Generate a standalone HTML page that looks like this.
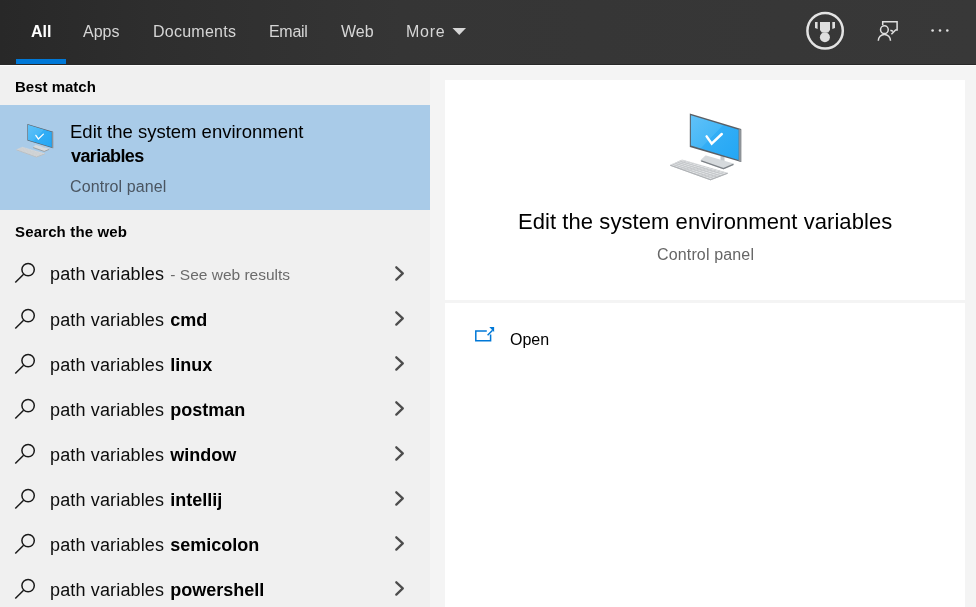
<!DOCTYPE html>
<html><head><meta charset="utf-8">
<style>
*{margin:0;padding:0;box-sizing:border-box}
html,body{width:976px;height:607px;overflow:hidden;background:#f4f4f4;font-family:"Liberation Sans",sans-serif}
.a{position:absolute;white-space:pre;line-height:1;will-change:transform}
.ic{position:absolute;overflow:visible}
#hdr{position:absolute;left:0;top:0;width:976px;height:65px;background:linear-gradient(90deg,#282828 0,#2e2e2e 150px,#353535 400px,#383838 976px)}
.tab{color:#d6d6d6;font-size:16px;top:23.5px}
#left{position:absolute;left:0;top:65px;width:430px;height:542px;background:#f0f0f0}
#sel{position:absolute;left:0;top:105px;width:430px;height:105px;background:#a9cbe8}
.card{position:absolute;left:445px;width:520px;background:#fff}
.row{font-size:18px;color:#0d0d0d;left:50px;letter-spacing:0.15px}
.row b{font-weight:700;color:#000;letter-spacing:0;margin-left:1px}
.sw{font-size:15.5px;color:#6b6b6b;letter-spacing:0;margin-left:1px}
</style></head><body>
<div id="hdr"></div>
<div class="a tab" style="left:31px;color:#fff;font-weight:700">All</div>
<div style="position:absolute;left:16px;top:59px;width:50px;height:5px;background:#0078d7"></div>
<div class="a tab" style="left:83px">Apps</div>
<div class="a tab" style="left:152.5px;letter-spacing:0.25px">Documents</div>
<div class="a tab" style="left:269px;letter-spacing:-0.3px">Email</div>
<div class="a tab" style="left:341px">Web</div>
<div class="a tab" style="left:406px;letter-spacing:0.75px">More</div>
<svg class="ic" style="left:800px;top:5px" width="50" height="52" viewBox="800 5 50 52">
<circle cx="825.1" cy="30.75" r="17.7" fill="none" stroke="#e3e3e3" stroke-width="2.5"/>
<polygon points="820,22 830,22 830,30 828.2,32.6 821.8,32.6 820,30" fill="#dedede"/>
<circle cx="824.9" cy="37.2" r="5" fill="#dedede"/>
<polygon points="815,22 817.6,22 817.6,29 815,28" fill="#dedede"/>
<polygon points="832.3,22 835,22 835,28 832.3,29" fill="#dedede"/>
</svg>
<svg class="ic" style="left:870px;top:15px" width="36" height="36" viewBox="870 15 36 36">
<path d="M882.7 25V21.7H897.1V30H895.6L891.4 34.3" fill="none" stroke="#e0e0e0" stroke-width="1.5"/>
<path d="M890.4 30.3L893 31.2" fill="none" stroke="#e0e0e0" stroke-width="1.5"/>
<circle cx="884.4" cy="29.7" r="3.85" fill="none" stroke="#e0e0e0" stroke-width="1.5"/>
<path d="M878.3 40.8A6.1 6.4 0 0 1 890.5 40.8" fill="none" stroke="#e0e0e0" stroke-width="1.5"/>
</svg>
<svg class="ic" style="left:925px;top:25px" width="30" height="12" viewBox="925 25 30 12">
<circle cx="932.6" cy="30.5" r="1.3" fill="#e0e0e0"/><circle cx="940" cy="30.5" r="1.3" fill="#e0e0e0"/><circle cx="947.3" cy="30.5" r="1.3" fill="#e0e0e0"/>
</svg>
<svg class="ic" style="left:450px;top:25px" width="20" height="14" viewBox="450 25 20 14"><polygon points="452.5,28 466,28 459.25,35" fill="#d6d6d6"/></svg>
<div id="left"></div>
<div style="position:absolute;left:0;top:64px;width:976px;height:1px;background:#282828"></div>
<div style="position:absolute;left:0;top:65px;width:976px;height:1px;background:#fbfbfb"></div>
<div id="sel"></div>
<svg class="ic" style="left:10px;top:115px" width="50" height="50" viewBox="10 115 50 50">
<g transform="translate(-317.5,67.15) scale(0.5)">
<linearGradient id="scrb" x1="690" y1="113" x2="741" y2="162" gradientUnits="userSpaceOnUse"><stop offset="0" stop-color="#62c2f8"/><stop offset="0.45" stop-color="#45b7f7"/><stop offset="0.46" stop-color="#33aef6"/><stop offset="1" stop-color="#22a6f4"/></linearGradient>
<polygon points="667.70,165.30 679.50,160.00 725.00,173.20 707.90,179.80" fill="#e2e4e6" stroke="#d4d6d8" stroke-width="1" stroke-linejoin="round"/>
<line x1="670.06" y1="164.24" x2="711.32" y2="178.48" stroke="#bfc2c5" stroke-width="0.9"/>
<line x1="672.42" y1="163.18" x2="714.74" y2="177.16" stroke="#bfc2c5" stroke-width="0.9"/>
<line x1="674.78" y1="162.12" x2="718.16" y2="175.84" stroke="#bfc2c5" stroke-width="0.9"/>
<line x1="677.14" y1="161.06" x2="721.58" y2="174.52" stroke="#bfc2c5" stroke-width="0.9"/>
<line x1="671.05" y1="166.51" x2="683.29" y2="161.10" stroke="#c6c9cc" stroke-width="0.9"/>
<line x1="674.40" y1="167.72" x2="687.08" y2="162.20" stroke="#c6c9cc" stroke-width="0.9"/>
<line x1="677.75" y1="168.93" x2="690.88" y2="163.30" stroke="#c6c9cc" stroke-width="0.9"/>
<line x1="681.10" y1="170.13" x2="694.67" y2="164.40" stroke="#c6c9cc" stroke-width="0.9"/>
<line x1="684.45" y1="171.34" x2="698.46" y2="165.50" stroke="#c6c9cc" stroke-width="0.9"/>
<line x1="687.80" y1="172.55" x2="702.25" y2="166.60" stroke="#c6c9cc" stroke-width="0.9"/>
<line x1="691.15" y1="173.76" x2="706.04" y2="167.70" stroke="#c6c9cc" stroke-width="0.9"/>
<line x1="694.50" y1="174.97" x2="709.83" y2="168.80" stroke="#c6c9cc" stroke-width="0.9"/>
<line x1="697.85" y1="176.18" x2="713.62" y2="169.90" stroke="#c6c9cc" stroke-width="0.9"/>
<line x1="701.20" y1="177.38" x2="717.42" y2="171.00" stroke="#c6c9cc" stroke-width="0.9"/>
<line x1="704.55" y1="178.59" x2="721.21" y2="172.10" stroke="#c6c9cc" stroke-width="0.9"/>
<polyline points="667.70,165.30 707.90,179.80 725.00,173.20" fill="none" stroke="#aeb1b4" stroke-width="1.2" stroke-linejoin="round"/>
<polygon points="701.2,160.6 706,156.2 733.4,164.2 723.5,168.4" fill="#d6dadd" stroke="#d6dadd" stroke-width="1.6" stroke-linejoin="round"/>
<polyline points="701.2,160.8 723.5,168.6 733.4,164.4" fill="none" stroke="#7d8287" stroke-width="1.3" stroke-linejoin="round"/>
<polygon points="720.5,155 724.5,156 724.5,161 720.5,160" fill="#c3c8cc"/>
<polygon points="689.8,113.5 741.2,129.1 741.2,162 689.8,146.9" fill="#5a5f65"/>
<polygon points="738.6,129 741.2,129.8 741.2,162 738.6,161.2" fill="#8e9398"/>
<polygon points="690.9,115.2 738.6,129.7 738.6,160 690.9,145.6" fill="url(#scrb)"/>
<polyline points="706.6,136.4 711.7,143.6 721.8,134" fill="none" stroke="#fff" stroke-width="2.5" stroke-linecap="round"/>
</g>
</svg>
<div class="a" style="left:15px;top:79px;font-size:15px;font-weight:700;color:#000">Best match</div>
<div class="a" style="left:70px;top:123px;font-size:18.5px;color:#000">Edit the system environment</div>
<div class="a" style="left:70.5px;top:147px;font-size:18px;font-weight:700;color:#000;letter-spacing:-0.6px">variables</div>
<div class="a" style="left:70px;top:179px;font-size:16px;color:#4a5561;letter-spacing:0.1px">Control panel</div>
<div class="a" style="left:15px;top:224px;font-size:15px;font-weight:700;color:#000;letter-spacing:0.15px">Search the web</div>
<svg class="ic" style="left:10px;top:258px" width="30" height="30" viewBox="10 258 30 30"><circle cx="28.1" cy="269.6" r="6.2" fill="none" stroke="#1a1a1a" stroke-width="1.5"/><path d="M15.3 282.5L23.6 274.3" stroke="#1a1a1a" stroke-width="1.5" fill="none"/></svg>
<div class="a row" style="top:264.6px">path variables <span class="sw">- See web results</span></div>
<svg class="ic" style="left:385px;top:258px" width="30" height="30" viewBox="385 258 30 30"><path d="M396.3 267.3L402.8 273.4L396.3 279.6" stroke="#4d4d4d" stroke-width="2.3" fill="none" stroke-linecap="round" stroke-linejoin="round"/></svg>
<svg class="ic" style="left:10px;top:304px" width="30" height="30" viewBox="10 258 30 30"><circle cx="28.1" cy="269.6" r="6.2" fill="none" stroke="#1a1a1a" stroke-width="1.5"/><path d="M15.3 282.5L23.6 274.3" stroke="#1a1a1a" stroke-width="1.5" fill="none"/></svg>
<div class="a row" style="top:310.6px">path variables <b>cmd</b></div>
<svg class="ic" style="left:385px;top:303px" width="30" height="30" viewBox="385 258 30 30"><path d="M396.3 267.3L402.8 273.4L396.3 279.6" stroke="#4d4d4d" stroke-width="2.3" fill="none" stroke-linecap="round" stroke-linejoin="round"/></svg>
<svg class="ic" style="left:10px;top:349px" width="30" height="30" viewBox="10 258 30 30"><circle cx="28.1" cy="269.6" r="6.2" fill="none" stroke="#1a1a1a" stroke-width="1.5"/><path d="M15.3 282.5L23.6 274.3" stroke="#1a1a1a" stroke-width="1.5" fill="none"/></svg>
<div class="a row" style="top:355.6px">path variables <b>linux</b></div>
<svg class="ic" style="left:385px;top:348px" width="30" height="30" viewBox="385 258 30 30"><path d="M396.3 267.3L402.8 273.4L396.3 279.6" stroke="#4d4d4d" stroke-width="2.3" fill="none" stroke-linecap="round" stroke-linejoin="round"/></svg>
<svg class="ic" style="left:10px;top:394px" width="30" height="30" viewBox="10 258 30 30"><circle cx="28.1" cy="269.6" r="6.2" fill="none" stroke="#1a1a1a" stroke-width="1.5"/><path d="M15.3 282.5L23.6 274.3" stroke="#1a1a1a" stroke-width="1.5" fill="none"/></svg>
<div class="a row" style="top:400.6px">path variables <b>postman</b></div>
<svg class="ic" style="left:385px;top:393px" width="30" height="30" viewBox="385 258 30 30"><path d="M396.3 267.3L402.8 273.4L396.3 279.6" stroke="#4d4d4d" stroke-width="2.3" fill="none" stroke-linecap="round" stroke-linejoin="round"/></svg>
<svg class="ic" style="left:10px;top:439px" width="30" height="30" viewBox="10 258 30 30"><circle cx="28.1" cy="269.6" r="6.2" fill="none" stroke="#1a1a1a" stroke-width="1.5"/><path d="M15.3 282.5L23.6 274.3" stroke="#1a1a1a" stroke-width="1.5" fill="none"/></svg>
<div class="a row" style="top:445.6px">path variables <b>window</b></div>
<svg class="ic" style="left:385px;top:438px" width="30" height="30" viewBox="385 258 30 30"><path d="M396.3 267.3L402.8 273.4L396.3 279.6" stroke="#4d4d4d" stroke-width="2.3" fill="none" stroke-linecap="round" stroke-linejoin="round"/></svg>
<svg class="ic" style="left:10px;top:484px" width="30" height="30" viewBox="10 258 30 30"><circle cx="28.1" cy="269.6" r="6.2" fill="none" stroke="#1a1a1a" stroke-width="1.5"/><path d="M15.3 282.5L23.6 274.3" stroke="#1a1a1a" stroke-width="1.5" fill="none"/></svg>
<div class="a row" style="top:490.6px">path variables <b>intellij</b></div>
<svg class="ic" style="left:385px;top:483px" width="30" height="30" viewBox="385 258 30 30"><path d="M396.3 267.3L402.8 273.4L396.3 279.6" stroke="#4d4d4d" stroke-width="2.3" fill="none" stroke-linecap="round" stroke-linejoin="round"/></svg>
<svg class="ic" style="left:10px;top:529px" width="30" height="30" viewBox="10 258 30 30"><circle cx="28.1" cy="269.6" r="6.2" fill="none" stroke="#1a1a1a" stroke-width="1.5"/><path d="M15.3 282.5L23.6 274.3" stroke="#1a1a1a" stroke-width="1.5" fill="none"/></svg>
<div class="a row" style="top:535.6px">path variables <b>semicolon</b></div>
<svg class="ic" style="left:385px;top:528px" width="30" height="30" viewBox="385 258 30 30"><path d="M396.3 267.3L402.8 273.4L396.3 279.6" stroke="#4d4d4d" stroke-width="2.3" fill="none" stroke-linecap="round" stroke-linejoin="round"/></svg>
<svg class="ic" style="left:10px;top:574px" width="30" height="30" viewBox="10 258 30 30"><circle cx="28.1" cy="269.6" r="6.2" fill="none" stroke="#1a1a1a" stroke-width="1.5"/><path d="M15.3 282.5L23.6 274.3" stroke="#1a1a1a" stroke-width="1.5" fill="none"/></svg>
<div class="a row" style="top:580.6px">path variables <b>powershell</b></div>
<svg class="ic" style="left:385px;top:573px" width="30" height="30" viewBox="385 258 30 30"><path d="M396.3 267.3L402.8 273.4L396.3 279.6" stroke="#4d4d4d" stroke-width="2.3" fill="none" stroke-linecap="round" stroke-linejoin="round"/></svg>
<div class="card" style="top:80px;height:220px"></div>
<div class="card" style="top:303px;height:304px"></div>
<svg class="ic" style="left:660px;top:105px" width="90" height="80" viewBox="660 105 90 80">
<linearGradient id="scra" x1="690" y1="113" x2="741" y2="162" gradientUnits="userSpaceOnUse"><stop offset="0" stop-color="#62c2f8"/><stop offset="0.45" stop-color="#45b7f7"/><stop offset="0.46" stop-color="#33aef6"/><stop offset="1" stop-color="#22a6f4"/></linearGradient>
<polygon points="670.30,165.30 682.10,160.00 727.60,173.20 710.50,179.80" fill="#e2e4e6" stroke="#d4d6d8" stroke-width="1" stroke-linejoin="round"/>
<line x1="672.66" y1="164.24" x2="713.92" y2="178.48" stroke="#bfc2c5" stroke-width="0.9"/>
<line x1="675.02" y1="163.18" x2="717.34" y2="177.16" stroke="#bfc2c5" stroke-width="0.9"/>
<line x1="677.38" y1="162.12" x2="720.76" y2="175.84" stroke="#bfc2c5" stroke-width="0.9"/>
<line x1="679.74" y1="161.06" x2="724.18" y2="174.52" stroke="#bfc2c5" stroke-width="0.9"/>
<line x1="673.65" y1="166.51" x2="685.89" y2="161.10" stroke="#c6c9cc" stroke-width="0.9"/>
<line x1="677.00" y1="167.72" x2="689.68" y2="162.20" stroke="#c6c9cc" stroke-width="0.9"/>
<line x1="680.35" y1="168.93" x2="693.48" y2="163.30" stroke="#c6c9cc" stroke-width="0.9"/>
<line x1="683.70" y1="170.13" x2="697.27" y2="164.40" stroke="#c6c9cc" stroke-width="0.9"/>
<line x1="687.05" y1="171.34" x2="701.06" y2="165.50" stroke="#c6c9cc" stroke-width="0.9"/>
<line x1="690.40" y1="172.55" x2="704.85" y2="166.60" stroke="#c6c9cc" stroke-width="0.9"/>
<line x1="693.75" y1="173.76" x2="708.64" y2="167.70" stroke="#c6c9cc" stroke-width="0.9"/>
<line x1="697.10" y1="174.97" x2="712.43" y2="168.80" stroke="#c6c9cc" stroke-width="0.9"/>
<line x1="700.45" y1="176.18" x2="716.23" y2="169.90" stroke="#c6c9cc" stroke-width="0.9"/>
<line x1="703.80" y1="177.38" x2="720.02" y2="171.00" stroke="#c6c9cc" stroke-width="0.9"/>
<line x1="707.15" y1="178.59" x2="723.81" y2="172.10" stroke="#c6c9cc" stroke-width="0.9"/>
<polyline points="670.30,165.30 710.50,179.80 727.60,173.20" fill="none" stroke="#aeb1b4" stroke-width="1.2" stroke-linejoin="round"/>
<polygon points="701.2,160.6 706,156.2 733.4,164.2 723.5,168.4" fill="#d6dadd" stroke="#d6dadd" stroke-width="1.6" stroke-linejoin="round"/>
<polyline points="701.2,160.8 723.5,168.6 733.4,164.4" fill="none" stroke="#7d8287" stroke-width="1.3" stroke-linejoin="round"/>
<polygon points="720.5,155 724.5,156 724.5,161 720.5,160" fill="#c3c8cc"/>
<polygon points="689.8,113.5 741.2,129.1 741.2,162 689.8,146.9" fill="#5a5f65"/>
<polygon points="738.6,129 741.2,129.8 741.2,162 738.6,161.2" fill="#8e9398"/>
<polygon points="690.9,115.2 738.6,129.7 738.6,160 690.9,145.6" fill="url(#scra)"/>
<polyline points="706.6,136.4 711.7,143.6 721.8,134" fill="none" stroke="#fff" stroke-width="2.5" stroke-linecap="round"/>
</svg>
<div class="a" style="left:518px;top:211px;font-size:22px;color:#000;letter-spacing:0.07px">Edit the system environment variables</div>
<div class="a" style="left:656.5px;top:247px;font-size:16px;color:#666666;letter-spacing:0.15px">Control panel</div>
<svg class="ic" style="left:470px;top:322px" width="30" height="24" viewBox="470 322 30 24">
<path d="M486.8 330.9H475.8V340.7H490.6V334.6" fill="none" stroke="#0078d7" stroke-width="1.5"/>
<path d="M487.6 335.2L492.6 330.2" fill="none" stroke="#0078d7" stroke-width="1.5"/>
<polygon points="494.1,327.1 494.1,331.9 489.3,327.1" fill="#0078d7"/>
</svg>
<div class="a" style="left:510px;top:331.5px;font-size:16px;color:#000">Open</div>
</body></html>
